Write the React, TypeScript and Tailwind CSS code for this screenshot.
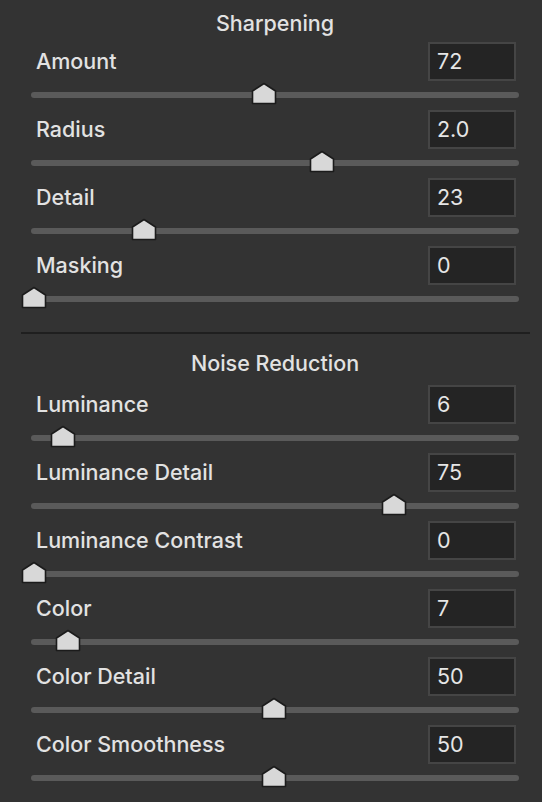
import React from "react";

type Control = {
  label: string;
  value: string;
  frac: number;
};

const sharpening: Control[] = [
  { label: "Amount", value: "72", frac: 72 / 150 },
  { label: "Radius", value: "2.0", frac: (2.0 - 0.5) / 2.5 },
  { label: "Detail", value: "23", frac: 23 / 100 },
  { label: "Masking", value: "0", frac: 0 },
];

const noise: Control[] = [
  { label: "Luminance", value: "6", frac: 6 / 100 },
  { label: "Luminance Detail", value: "75", frac: 75 / 100 },
  { label: "Luminance Contrast", value: "0", frac: 0 },
  { label: "Color", value: "7", frac: 7 / 100 },
  { label: "Color Detail", value: "50", frac: 50 / 100 },
  { label: "Color Smoothness", value: "50", frac: 50 / 100 },
];

function Thumb({ frac }: { frac: number }) {
  // thumb centre travels 480px along the track
  return (
    <svg
      width="26"
      height="23"
      viewBox="0 0 26 23"
      className="absolute top-[-10px]"
      style={{ left: -10 + frac * 480 }}
    >
      <polygon
        points="1.5,9 13,1.5 24.5,9 24.5,21.5 1.5,21.5"
        fill="#d8d8d8"
        stroke="#1b1b1b"
        strokeWidth="1.6"
        strokeLinejoin="round"
      />
    </svg>
  );
}

function SliderRow({ label, value, frac }: Control) {
  return (
    <div className="h-[68px]">
      <div className="flex h-[39px] items-center justify-between pl-[36px] pr-[26px]">
        <span className="text-[21.5px] font-medium text-[#e2e2e2]">{label}</span>
        <div className="flex h-[39px] w-[88px] items-center border-2 border-[#454545] bg-[#242424] pl-[7px] text-[21.5px] text-[#e6e6e6]">
          {value}
        </div>
      </div>
      <div className="relative ml-[31px] mr-[23px] mt-[11px] h-[6px] rounded-full bg-[#5a5a5a]">
        <Thumb frac={frac} />
      </div>
    </div>
  );
}

function SectionTitle({ title, className }: { title: string; className: string }) {
  return (
    <div className={"flex items-center justify-center pl-[31px] pr-[23px] " + className}>
      <span className="text-[21.5px] font-medium text-[#e2e2e2]">{title}</span>
    </div>
  );
}

export default function App() {
  return (
    <div
      className="h-[802px] w-[542px] overflow-hidden bg-[#333333]"
      style={{ fontFamily: "Inter, 'Liberation Sans', sans-serif" }}
    >
      <SectionTitle title="Sharpening" className="h-[42px] pt-[4px]" />
      {sharpening.map((c) => (
        <SliderRow key={c.label} {...c} />
      ))}

      <div className="ml-[21px] mr-[12px] mt-[18px] h-[2px] bg-[#1f1f1f]" />

      <SectionTitle title="Noise Reduction" className="h-[51px] pt-[8px]" />
      {noise.map((c) => (
        <SliderRow key={c.label} {...c} />
      ))}
    </div>
  );
}
